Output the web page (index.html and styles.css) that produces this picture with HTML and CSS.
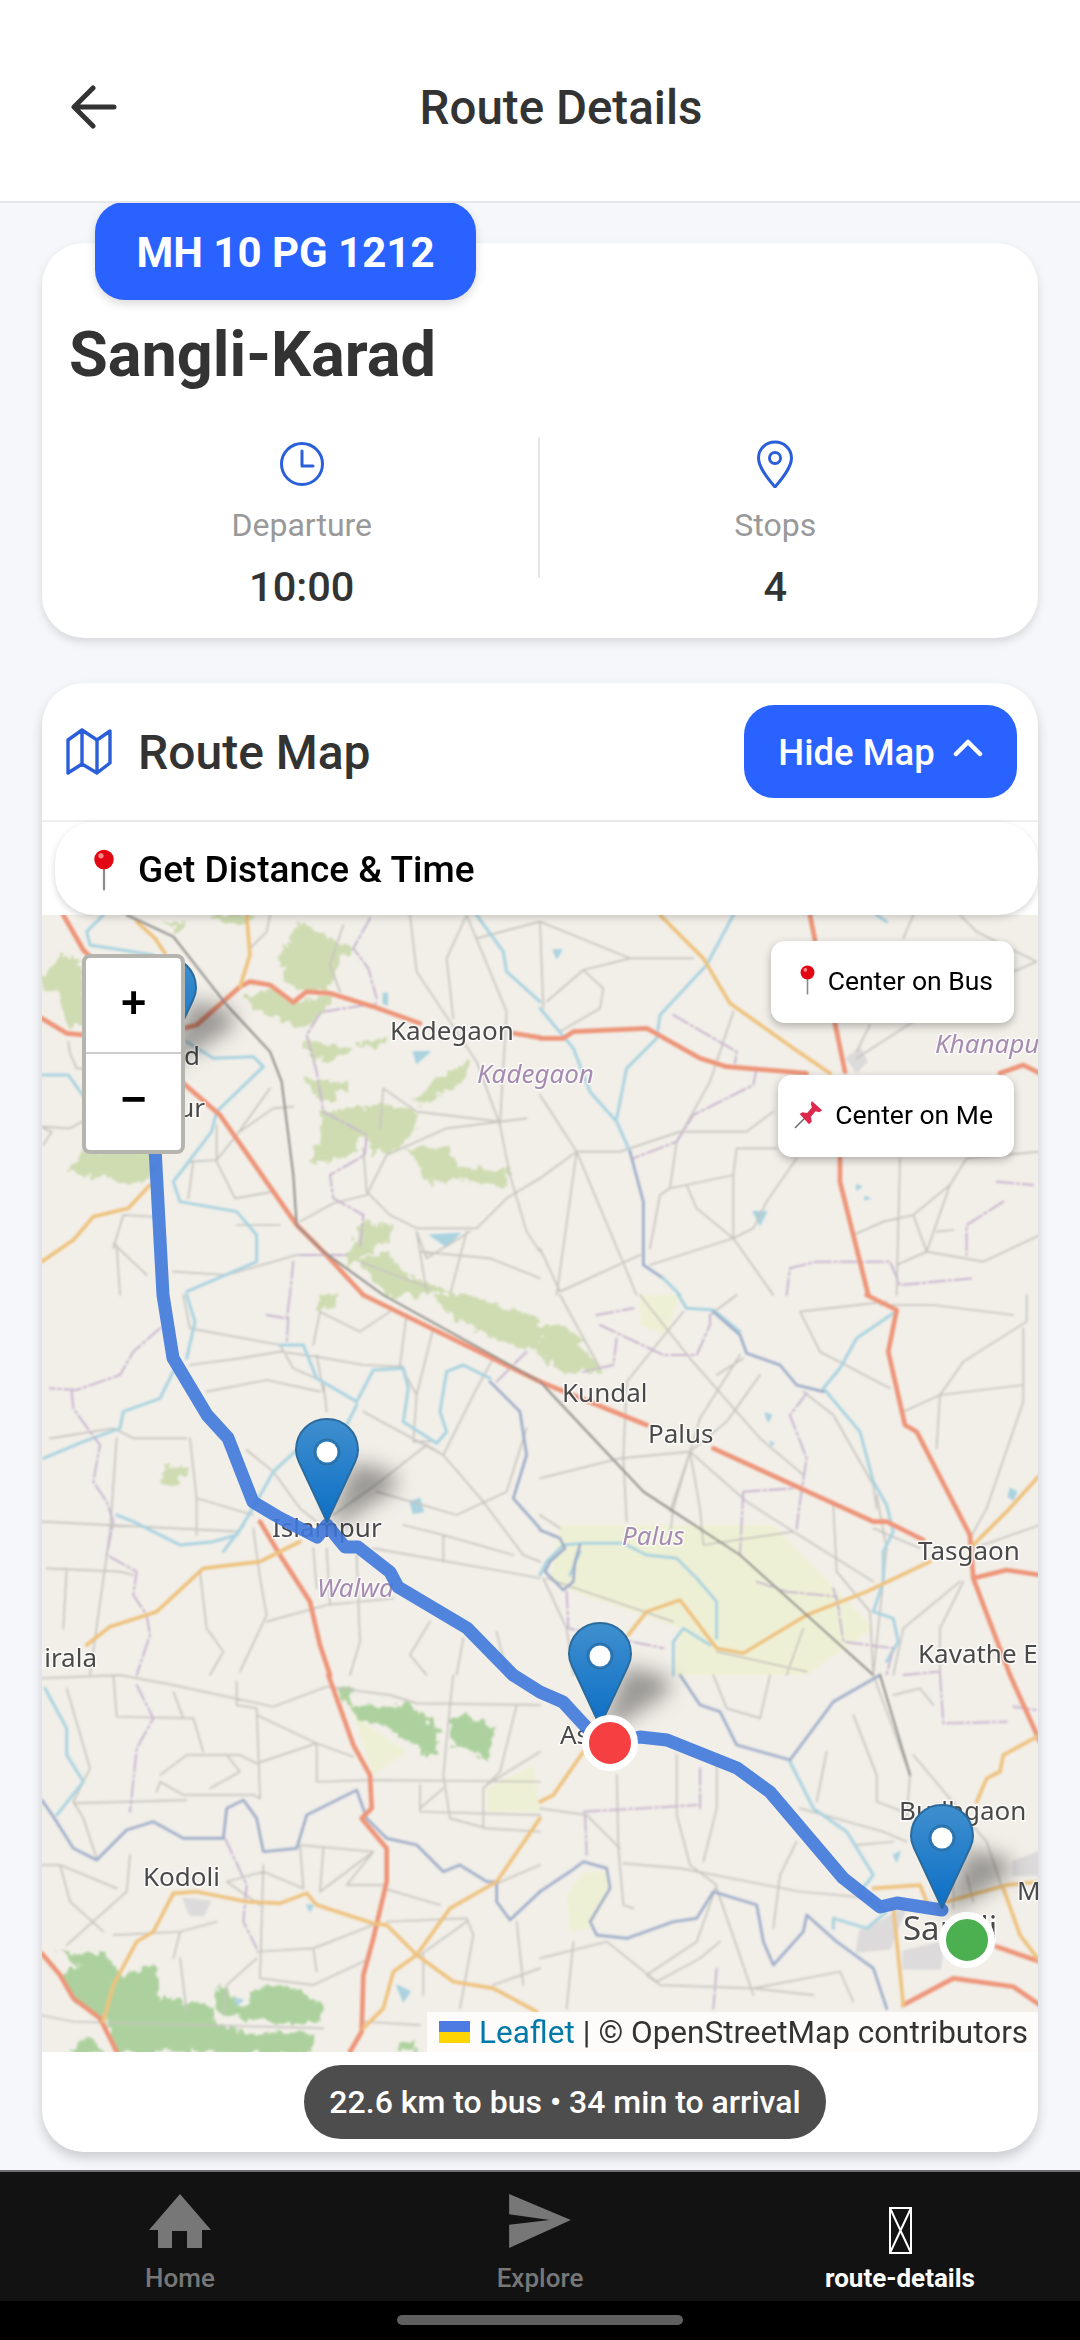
FILE: index.html
```html
<!DOCTYPE html>
<html lang="en">
<head>
<meta charset="utf-8">
<title>Route Details</title>
<link rel="stylesheet" href="styles.css">
</head>
<body>
<div class="app">
  <header class="topbar">
    <svg class="back" viewBox="0 0 46 44"><path d="M43 22H4M22 3 3 22l19 19"/></svg>
    <h1 class="title">Route Details</h1>
  </header>
  <main class="content">
    <section class="card info">
      <div class="badge">MH 10 PG 1212</div>
      <h2 class="name">Sangli-Karad</h2>
      <div class="stats">
        <div class="stat">
          <svg class="stat-icon" viewBox="0 0 48 48"><circle cx="24" cy="24" r="20.5"/><path d="M24 11v15h11"/></svg>
          <div class="stat-label">Departure</div>
          <div class="stat-value">10:00</div>
        </div>
        <div class="stat-divider"></div>
        <div class="stat">
          <svg class="stat-icon" viewBox="0 0 48 48"><path d="M24 2C15 2 7.500 9 7.500 18 7.500 28 18 40 24 47c6-7 16.500-19 16.500-29C40.500 9 33 2 24 2Z"/><circle cx="24" cy="18" r="5.500"/></svg>
          <div class="stat-label">Stops</div>
          <div class="stat-value">4</div>
        </div>
      </div>
    </section>

    <section class="card map-card">
      <div class="map-head">
        <div class="map-title">
          <svg class="map-icon" viewBox="0 0 48 48"><path d="M3 12 17 2 32 12 45 3V35L32 45 17 36 3 45ZM17 2V36M32 12V45"/></svg>
          <span>Route Map</span>
        </div>
        <button class="hide-btn"><span>Hide Map</span><svg viewBox="0 0 30 18"><path d="M3 15 15 3l12 12"/></svg></button>
      </div>
      <button class="distance-btn">
        <svg class="emoji-pin" viewBox="0 0 28 56"><path class="needle" d="M14 22v33"/><circle class="ball" cx="14" cy="14" r="13"/><circle class="shine" cx="10" cy="9" r="3.500"/></svg>
        <span>Get Distance &amp; Time</span>
      </button>

      <div class="map">
        <svg class="tiles" viewBox="42 915 996 1137" preserveAspectRatio="none">
          <defs>
            <filter id="soft" x="-2%" y="-2%" width="104%" height="104%"><feGaussianBlur stdDeviation="0.9"/></filter>
            <filter id="softtext" x="-5%" y="-5%" width="110%" height="110%"><feGaussianBlur stdDeviation="0.55"/></filter>
            <filter id="rough" x="-5%" y="-5%" width="110%" height="110%"><feTurbulence type="fractalNoise" baseFrequency="0.035" numOctaves="3" seed="4"/><feDisplacementMap in="SourceGraphic" scale="42" xChannelSelector="R" yChannelSelector="G"/></filter>
            <filter id="shadowblur" x="-80%" y="-80%" width="260%" height="260%"><feGaussianBlur stdDeviation="10"/></filter>
            <linearGradient id="pinfill" x1="0" y1="0" x2="0" y2="1"><stop offset="0" stop-color="#3f8fce"/><stop offset="1" stop-color="#0d6fc6"/></linearGradient>
            <g id="pin">
              <path class="pin-shadow" d="M2 0 26 -60 66 -50 70 -34 10 4Z" filter="url(#shadowblur)"/>
              <path class="pin-body" d="M0 0-28-60C-31-66-31-70-31-72-31-90-17-103 0-103S31-90 31-72C31-70 31-66 28-60Z"/>
              <circle class="pin-ring" cx="0" cy="-70" r="13"/>
              <circle class="pin-hole" cx="0" cy="-70" r="10.500"/>
            </g>
          </defs>
          <rect class="land" x="42" y="915" width="996" height="1137"/>
          <g filter="url(#soft)">
            <!-- tile block top left -->
            <g transform="translate(40 915) scale(.3333)">
              <path class="forest" filter="url(#rough)" d="M10 180 70 120 130 150 135 330 80 330 60 230 10 220ZM90 770 135 710 330 710 330 790 260 810 190 780ZM780 20 870 70 940 100 900 130 860 230 740 210 720 130ZM620 250 700 220 760 262 880 250 840 290 790 340 650 280ZM790 380 930 400 880 430 820 430ZM800 490 920 510 880 550 830 540ZM840 600 1020 570 1130 590 1100 680 1000 720 980 650 930 720 850 740 810 740 850 660ZM1100 700 1220 700 1250 760 1400 770 1400 810 1260 790 1170 800ZM1120 560 1200 490 1290 440 1260 500 1150 570ZM950 390 1040 370 1010 400ZM920 1010 980 920 1060 940 1030 990 960 1020 930 1050ZM950 1040 1040 1010 1090 1080 1230 1130 1050 1140ZM520 0 640 0 600 30ZM380 20 440 30 410 45Z"/>
              <path class="water" d="M1120 410 1170 410 1130 445ZM1170 960 1260 955 1220 995ZM1030 235 1042 235 1042 270 1030 265Z"/>
              <path class="minor" d="M85 380 90 415 110 460 135 460M5 635 90 640 135 615M10 640 35 650 10 690M400 800 450 740 530 735 590 660 690 520M530 630 530 740 585 850 700 830 770 920M600 650 700 580 760 575M445 850 460 740M220 1000 250 900 340 905M220 985 320 1080M240 1140 230 990M780 920 880 865 980 840 1040 720 1130 680 1220 640 1380 620 1460 610M1030 520 1020 640M1030 520 1130 590 1380 620M970 700 980 830 1050 900 1130 940 1310 940 1400 850 1500 790M1110 0 1130 170 1230 320 1310 440 1380 630 1410 780 1460 950 1500 1010M1280 0 1400 290 1380 630M1280 0 1220 130 1240 310M1310 70 1500 20M910 30 870 150 900 230M1130 950 1160 1030 1290 950M1140 1010 1350 1030 1500 1090M1280 950 1230 1140M1130 950 1160 1130M400 1070 560 1080 770 1020 920 1020M960 1040 1170 1120M690 0 680 50 630 100M590 930 720 930"/>
              <path class="river" d="M190 0 140 50 150 90 340 120M5 480 85 480 135 550M440 380 520 430 640 425 670 455 530 590 515 650 400 800 420 860 590 890 650 960 650 1040 440 1130M1310 0 1390 110 1400 170 1500 260"/>
              <path class="boundary" d="M990 10 940 100 985 160 1010 250M850 290 1010 265M840 295 800 360 830 470 850 590 980 660 975 720 870 780 880 850 970 900 960 1000M760 1040 750 1140M780 1020 920 1020"/>
              <path class="major" d="M70 0 130 105 150 125M5 310 80 355 135 360M430 340 470 330 600 215 630 200 690 210 760 262 800 230 870 235 1000 275 1140 325M1420 355 1500 368M430 505 540 600 770 930 850 1010 970 1140"/>
              <path class="second" d="M290 20 345 70 375 115M620 0 630 120 600 215M5 1040 100 975 160 905 265 880 330 810"/>
              <path class="rail" d="M260 0 400 65 560 270 690 410 725 500 760 780 770 930 850 1010 1030 1140"/>
            </g>
            <!-- tile block top right -->
            <g transform="translate(540 915) scale(.3333)">
              <path class="water" d="M40 105 65 105 50 130ZM640 890 680 890 660 930ZM950 810 965 815 950 825ZM975 845 990 850 975 855Z"/>
              <path class="urban" d="M920 430 960 400 980 440 950 470Z"/>
              <path class="minor" d="M0 20 270 130 460 130M270 130 130 165 20 260M130 165 190 220 180 280 60 350M0 20 10 280M0 540 110 710 290 1140M110 710 0 790M110 710 240 710 420 650 620 650 700 590M110 710 50 1140M580 290 510 500 410 680 390 820 360 840M390 820 440 810 580 780 590 700 710 700M440 810 470 880 580 970 640 940 680 860 770 730M360 840 330 1000M0 1000 60 1130M580 970 330 1050M580 970 580 780M580 970 700 1140M60 1130 300 1020M990 330 950 410M1120 320 950 430M1080 730 1070 1140M1230 810 1280 730 1500 710M1230 810 1120 900 1160 1010 1070 1050M1230 810 1160 1010M1120 900 1030 920 940 960M1160 1010 1330 1040 1500 960M1120 0 1090 70M1260 0 1310 50 1490 140 1420 170M1190 950 1240 945"/>
              <path class="river" d="M0 280 100 400 150 530 230 620 270 710M580 0 500 150 360 300 350 370 260 460 230 610M1010 0 1040 20"/>
              <path class="river-dark" d="M270 710 310 860 310 1050 370 1090"/>
              <path class="river" d="M370 1090 420 1140"/>
              <path class="boundary" d="M400 300 590 410 585 445M650 460 640 510 460 600 410 680 280 730M740 1140 750 1060 830 1040 1050 1040 1080 1110 1300 1090M1390 860 1280 930 1280 1020M1370 800 1480 810"/>
              <path class="major" d="M810 0 825 75M885 325 915 470M0 370 70 370 100 350 320 340 480 430 560 455 800 475M900 730 900 800 940 960 985 1140M1380 475 1450 450 1500 475"/>
              <path class="second" d="M360 0 490 130 570 265 760 400 870 475"/>
            </g>
            <!-- tile block middle left -->
            <g transform="translate(40 1295) scale(.3333)">
              <path class="forest" filter="url(#rough)" d="M840 0 890 0 880 40 840 35ZM370 520 440 520 400 575 370 565ZM1180 0 1270 0 1500 70 1500 170 1370 130 1250 70Z"/>
              <path class="water" d="M1110 620 1140 610 1150 650 1120 655Z"/>
              <path class="minor" d="M430 0 450 100 720 150M720 150 760 220 850 260 860 350M500 290 680 255 840 290M450 210 600 190 720 170 830 185 970 210 1090 215M840 50 820 150M840 50 960 110 1050 50M1100 60 1080 210 1130 300 1120 440 1170 440M1180 100 1130 300M830 180 850 290M970 350 1210 480 1330 620 1450 780 1500 800M1210 480 1160 450 1020 560 880 660M1010 590 1250 660 1400 590 1460 400M620 465 700 530 780 640 830 680M440 430 280 430 220 400 30 430M450 430 470 610 470 720M470 610 640 660M5 680 600 710M640 700 660 850 680 960 600 1130M680 980 860 930 1060 910M1000 760 1450 840 1500 850M1210 720 1210 800M1090 690 1210 720 1420 780M950 780 960 1040 930 1140M1170 980 1110 1080 1160 1140M860 760 870 930M820 760 830 880M1400 1130 1370 1010M1270 1030 1250 1140M230 430 210 710 150 1140M80 820 70 1000M480 830 500 1000 550 1070 510 1140M20 820 240 830 280 840M1360 190 1310 280 1210 480"/>
              <path class="river" d="M440 0 465 80 440 190M400 230 360 310 250 350 240 400 130 440 10 490M720 150 790 150 830 250 950 320M950 320 1000 225 1090 220 1105 280 1090 380 1190 445 1220 410 1200 350 1220 230 1270 210 1350 250M950 330 920 390M770 465 700 530 650 620 590 720 520 740 420 750 280 680 230 660M610 690 550 770"/>
              <path class="river-dark" d="M1350 260 1440 350 1460 480 1420 610 1500 700"/>
              <path class="boundary" d="M680 60 740 70 750 0M745 70 740 145M360 100 280 170 240 240 110 285 30 280M95 290 100 340 150 410 180 450 160 560 200 620 220 680 200 780 290 830 280 900 320 960 330 1020 290 1140M1460 170 1370 260"/>
              <path class="major" d="M660 680 720 780 810 920 840 1050 870 1140M970 0 1500 260"/>
              <path class="second" d="M780 740 660 800 490 820 350 950 210 995 140 1050"/>
              <path class="rail" d="M1030 0 1500 260"/>
            </g>
            <!-- tile block middle right -->
            <g transform="translate(540 1295) scale(.3333)">
              <path class="farm" d="M60 690 700 690 1000 1000 800 1140 400 1140 420 1000 130 900 30 860ZM300 0 420 0 380 120 300 90Z"/>
              <path class="forest" filter="url(#rough)" d="M0 100 50 90 110 130 180 230 80 230 0 180Z"/>
              <path class="water" d="M675 355 695 360 685 380ZM690 440 702 445 695 452ZM1410 580 1430 590 1420 615 1405 605Z"/>
              <path class="minor" d="M60 0 180 220M300 0 450 190 660 430 790 540M430 50 260 260 250 490 260 680M510 60 590 0M600 180 480 370 400 640 390 720M660 240 560 380 450 470M450 470 390 650M450 470 480 640 490 750M450 470 240 490 0 550M450 470 620 620 760 710 1000 860M760 710 490 750M0 660 60 700M780 50 840 170 1050 280M1090 350 1200 300 1450 270M1450 100 1450 320 1340 640 1290 730M1200 300 1190 460M1010 600 1040 760 1000 1140M880 630 890 830 990 950 1000 1140M610 190 530 240M790 290 880 360 1000 570 1010 640M1000 700 1140 760M1500 690 1300 760M1270 860 1200 1000 1200 1140M1260 860 1090 1000 1060 1140M10 850 80 1000 100 1140M20 850 400 980M790 1000 740 1140M530 1070 800 1130M1460 0 1460 80 1270 200 1200 300M1020 30 1180 30 1420 60M1040 20 780 50"/>
              <path class="river" d="M415 0 440 40 520 45 600 110M1060 55 950 130 900 220 850 280 960 410 1000 560 1040 630 1060 710 1030 770 1030 860 1000 950 1060 970 1075 1040 1040 1100M0 840 20 800 70 750 130 745 250 745 320 780 410 790 470 850 530 920 530 1030M400 1140 400 1040 430 1000 510 1050M90 840 120 770"/>
              <path class="river-dark" d="M520 50 600 120 620 175 720 210 770 270 850 290M0 705 60 730 75 760 30 800 15 830 70 885 100 860 105 800 120 750"/>
              <path class="boundary" d="M170 60 280 40M180 90 370 180 470 180 510 90M230 130 220 210 130 230M510 90 510 60M800 295 750 360 800 490 780 620 770 700M610 590 760 580M610 590 600 780M650 860 740 890 890 905 910 1040 1060 1060 1040 1140M880 880 900 950M80 890 85 1000 370 1060M1090 1140 1200 1130"/>
              <path class="major" d="M0 260 320 390M520 460 1000 680 1040 680 1150 735M980 0 1070 45 1045 170 1095 390 1130 410 1290 720 1300 850 1410 1140M1300 850 1400 825 1500 840"/>
              <path class="second" d="M265 1020 320 950 420 915 530 1060 610 1075 800 960 980 890 1170 800M1300 750 1400 650 1500 540"/>
              <path class="rail" d="M0 260 310 590 600 780 800 960 1000 1140"/>
            </g>
            <!-- tile block bottom left -->
            <g transform="translate(40 1675) scale(.3333)">
              <path class="farm" d="M940 120 1100 230 1000 300ZM1340 340 1480 270 1500 410 1340 410Z"/>
              <path class="forest-dark" filter="url(#rough)" d="M895 40 940 40 930 100 1110 90 1200 170 1190 210 1170 250 1090 180 950 120ZM1230 140 1290 120 1360 170 1340 260 1300 220 1240 210ZM60 830 200 840 240 905 215 1000 190 1040 150 1010 100 970 60 900 100 880 140 880ZM240 910 340 870 360 930 340 960 450 990 510 990 520 1040 580 1060 650 1090 600 1130 220 1130 200 1040ZM540 930 600 1000 680 930 740 930 850 990 830 1040 700 1040 620 1030 530 1010ZM90 1130 140 1090 190 1130ZM620 1075 820 1075 810 1130 600 1130ZM1070 1110 1120 1095 1125 1130Z"/>
              <path class="water" d="M1070 930 1110 950 1090 980ZM580 970 610 975 590 990ZM800 690 820 690 810 710Z"/>
              <path class="urban" d="M430 670 510 680 490 720 450 720Z"/>
              <path class="minor" d="M0 10 240 0 400 30 700 95 860 35 1050 60 1130 85 1500 90M80 40 150 280 100 380 130 430 170 550M220 0 230 125 460 130 490 230M400 50 430 130M590 20 590 90 650 100 660 370M650 120 830 205 940 245M650 265 830 205 830 320 1000 315 1500 320M360 300 440 240 600 240 650 265M350 350 360 320 430 360 640 360 660 370M100 385 440 375M560 240 600 290 510 340M1240 0 1230 90 1210 300 1230 430 1340 460 1500 470M1430 90 1380 290 1330 340 1330 460M1140 330 1140 410 1500 420M1500 230 1340 330M1140 400 1210 340M270 540 260 650 80 810M0 570 60 570 90 680 190 770M60 570 230 640M780 510 790 640 670 590 560 620 660 690M670 570 660 910 820 930 990 850M850 520 840 650 1000 530 780 510M1030 640 1200 690M920 630 1030 630M1000 530 920 630M820 820 1000 750M650 830 820 820 830 890M530 740 420 770 220 780M420 770 400 850M1040 740 1280 730 1300 780 1260 1000M1280 740 1140 840M1150 840 1150 960M1360 630 1500 570M1430 740 1450 930M1360 930 1500 880M420 850 440 1010M650 850 560 930 550 1020M0 1020 100 1040 850 1060M970 1040 1140 1050"/>
              <path class="river" d="M15 40 80 160 80 240 130 320 50 420"/>
              <path class="river-dark" d="M5 375 40 425 100 520 170 555 260 465 340 440 430 490 550 490 560 400 610 375 650 430 670 530 770 520 800 420 950 345 980 430 1040 490 1130 510 1210 590 1260 570 1340 620 1370 620 1370 680 1410 735 1500 650"/>
              <path class="boundary" d="M290 30 340 130 290 220 270 410M555 490 620 630 610 740 650 820"/>
              <path class="major" d="M865 0 940 210 990 300 995 400 965 430 1040 520 1040 620 1000 790 970 900 965 1070 930 1130M5 835 60 900 100 970 180 1030 230 1130"/>
              <path class="second" d="M190 1040 220 930 290 800 340 770 400 655 470 650 620 680 720 685 800 655 830 690 1000 745 1040 750 1130 840 1240 920 1360 940 1490 1010M1130 840 1230 700 1370 620 1500 430M1130 840 1060 890 1030 1000 970 1060"/>
            </g>
            <!-- tile block bottom right -->
            <g transform="translate(540 1675) scale(.3333)">
              <path class="farm" d="M80 660 130 590 200 590 210 650 150 760 90 770Z"/>
              <path class="urban" d="M960 770 1040 730 1100 690 1050 820 950 830ZM1090 830 1210 800 1200 880 1090 880ZM1420 560 1500 530 1500 600 1420 600Z"/>
              <path class="water" d="M1060 540 1080 530 1070 560Z"/>
              <path class="minor" d="M520 0 560 100 660 130 690 0M230 300 235 520 250 690 280 700M0 400 140 420 240 520M250 565 420 580 780 650 1000 670M410 240 410 420 450 570 530 630 470 800 320 900 360 930 640 940 900 890 940 980M530 260 530 400 490 560M940 120 1010 300 1010 380 1090 410M780 400 1030 470 1100 500M1000 0 1110 300 1100 430M860 230 830 380M770 500 720 600 700 760M950 510 1060 500M1120 240 1220 360 1340 500 1390 650M530 640 640 960M0 850 200 800 350 920 480 850 540 800M1240 600 1240 700M1280 600 1300 680M100 800 80 1000M640 940 820 960M1060 60 1140 40 1180 90"/>
              <path class="river" d="M750 260 820 400 920 470 1000 600 960 650 1040 710 980 760 880 730 880 760"/>
              <path class="river-dark" d="M420 0 480 90 540 110 590 210 750 255 880 80 1020 0M0 650 90 590 130 560 200 580 210 640 150 740 170 780 260 790 400 740 470 730 520 650 650 690 670 800 700 870 790 770 800 720 890 800 1000 880 1040 1000"/>
              <path class="boundary" d="M480 280 480 400M130 410 470 390M135 420 140 540M1200 0 1210 145 1400 140M1420 95 1490 105M530 880 520 1000"/>
              <path class="major" d="M1410 0 1500 200M1370 815 1500 860M1090 990 1240 910 1420 935 1500 990"/>
              <path class="second" d="M0 380 40 360 130 230M1500 180 1390 240 1380 290 1340 310 1310 380M1000 640 1140 630 1160 680M1220 680 1400 630 1500 620M1390 640 1440 780 1500 860M1060 700 1090 990"/>
              <path class="rail" d="M1020 0 1110 300"/>
            </g>
          </g>
          <g class="labels" filter="url(#softtext)">
            <text x="390" y="1040">Kadegaon</text>
            <text class="district" x="477" y="1083">Kadegaon</text>
            <text class="district" x="935" y="1053">Khanapur</text>
            <text x="562" y="1402">Kundal</text>
            <text x="648" y="1443">Palus</text>
            <text class="district" x="622" y="1545">Palus</text>
            <text x="918" y="1560">Tasgaon</text>
            <text x="918" y="1663">Kavathe Ekand</text>
            <text x="272" y="1537">Islampur</text>
            <text class="district" x="317" y="1597">Walwa</text>
            <text class="end" x="97" y="1667">Shirala</text>
            <text x="143" y="1886">Kodoli</text>
            <text class="big" x="903" y="1940">Sangli</text>
            <text x="899" y="1820">Budhgaon</text>
            <text x="560" y="1744">Ashta</text>
            <text x="1017" y="1900">Miraj</text>
            <text class="end" x="200" y="1065">Karad</text>
            <text class="end" x="205" y="1117">Malkapur</text>
          </g>
          <polyline class="route" points="165,1060 150,1075 155,1148 163,1295 173,1358 207,1415 228,1438 253,1502 280,1518 317,1537 327,1525 345,1547 358,1547 390,1572 398,1587 467,1628 513,1675 540,1692 563,1702 587,1728 610,1743 640,1737 667,1740 737,1768 770,1792 843,1878 880,1907 897,1903 942,1910"/>
          <use href="#pin" x="165" y="1060"/>
          <use href="#pin" x="327" y="1522"/>
          <use href="#pin" x="600" y="1726"/>
          <use href="#pin" x="942" y="1908"/>
          <circle class="dot" cx="610" cy="1743" r="24.500"/>
          <circle class="dot green" cx="967" cy="1940" r="24.500"/>
        </svg>

        <div class="zoom">
          <div class="zoom-btn">+</div>
          <div class="zoom-btn minus">−</div>
        </div>

        <div class="center-btns">
          <button class="center-btn bus">
            <svg class="emoji-pin small" viewBox="0 0 28 56"><path class="needle" d="M14 22v33"/><circle class="ball" cx="14" cy="14" r="13"/><circle class="shine" cx="10" cy="9" r="3.500"/></svg>
            <span>Center on Bus</span>
          </button>
          <button class="center-btn me">
            <svg class="pushpin" viewBox="0 0 32 32"><path class="needle thin" d="M1 31 13 19"/><path class="push" d="M19 2l11 10-3 2-4-1-5 6 1 5-3 3-10-11 3-2 5 1 5-6-1-4Z"/></svg>
            <span>Center on Me</span>
          </button>
        </div>

        <div class="attribution">
          <svg class="flag" viewBox="0 0 31 22"><rect class="flag-blue" width="31" height="11"/><rect class="flag-yellow" y="11" width="31" height="11"/></svg>
          <a class="leaflet">Leaflet</a><span class="sep">|</span><span>© OpenStreetMap contributors</span>
        </div>
      </div>

      <div class="eta-wrap"><div class="eta">22.6 km to bus • 34 min to arrival</div></div>
    </section>
  </main>

  <nav class="tabbar">
    <div class="tab">
      <svg class="tab-icon" viewBox="0 0 62 54"><path d="M31 0 0 36h9v18h14V37h15v17h15V36h9Z"/></svg>
      <span class="tab-label">Home</span>
    </div>
    <div class="tab">
      <svg class="tab-icon" viewBox="0 0 64 56"><path d="M0 0 64 27 0 56V32l42-5L0 21Z"/></svg>
      <span class="tab-label">Explore</span>
    </div>
    <div class="tab active">
      <svg class="tab-icon tofu" viewBox="0 0 23 47"><path d="M1 1h21v45H1ZM1 1l21 45M22 1 1 46"/></svg>
      <span class="tab-label">route-details</span>
    </div>
  </nav>
  <div class="gesture"><div class="handle"></div></div>
</div>
</body>
</html>
```

FILE: styles.css
```css
* { box-sizing: border-box; }
html, body { margin: 0; padding: 0; }
body { width: 1080px; height: 2340px; overflow: hidden; font-family: Roboto, "Noto Sans", sans-serif; background: #f5f7fb; }
.app { width: 1080px; height: 2340px; display: flex; flex-direction: column; }

.topbar { height: 203px; flex: none; background: #fff; border-bottom: 2px solid #e6e7ea; display: flex; align-items: center; justify-content: center; position: relative; }
.back { position: absolute; left: 71px; top: 85px; width: 46px; height: 44px; fill: none; stroke: #333; stroke-width: 5; stroke-linecap: round; stroke-linejoin: round; }
.title { margin: 0 0 0 42px; font-size: 47.500px; font-weight: 500; color: #333; line-height: 56px; position: relative; top: 7px; }

.content { height: 1967px; flex: none; padding: 40px 42px 0; display: flex; flex-direction: column; gap: 45px; overflow: hidden; }
.card { background: #fff; border-radius: 42px; box-shadow: 0 4px 10px rgba(0,0,0,.13); flex: none; }

.info { position: relative; padding: 72px 27px 25px 24px; height: 395px; }
.badge { position: absolute; left: 53px; top: -41px; width: 381px; height: 98px; padding-top: 2px; border-radius: 30px; background: #2962ff; color: #fff; font-size: 42px; font-weight: 700; display: flex; align-items: center; justify-content: center; box-shadow: 0 4px 10px rgba(0,0,0,.15); }
.name { margin: 0 0 0 3px; font-size: 63px; font-weight: 700; line-height: 80px; color: #333; }
.stats { margin-top: 42px; display: flex; }
.stat { flex: 1; padding-top: 3px; display: flex; flex-direction: column; align-items: center; }
.stat-divider { width: 2px; height: 141px; background: #e6e6e6; flex: none; }
.stat-icon { width: 48px; height: 48px; fill: none; stroke: #2b5fd9; stroke-width: 3; stroke-linecap: round; stroke-linejoin: round; }
.stat-label { margin-top: 15px; font-size: 32px; line-height: 44px; color: #999; }
.stat-value { margin-top: 15px; font-size: 41.500px; line-height: 50px; font-weight: 500; color: #333; }

.map-card { overflow: hidden; box-shadow: 0 6px 12px rgba(0,0,0,.18); }
.map-head { height: 139px; border-bottom: 2px solid #eee; padding: 22px 21px 22px 23px; display: flex; align-items: flex-start; justify-content: space-between; }
.map-title { display: flex; align-items: center; gap: 25px; height: 93px; font-size: 48px; font-weight: 500; color: #333; }
.map-title span { position: relative; top: 1px; }
.map-icon { width: 48px; height: 48px; fill: none; stroke: #2b5fd9; stroke-width: 3.4; stroke-linejoin: round; stroke-linecap: round; }
.hide-btn { width: 273px; height: 93px; border: 0; border-radius: 30px; background: #2962ff; color: #fff; font-family: inherit; font-size: 36.500px; font-weight: 500; display: flex; align-items: center; justify-content: center; gap: 18px; padding: 2px 0 0; }
.hide-btn svg { width: 30px; height: 18px; fill: none; stroke: #fff; stroke-width: 4.5; stroke-linecap: round; stroke-linejoin: round; position: relative; top: -5px; }

.distance-btn { display: flex; align-items: center; gap: 20px; width: 983px; height: 93px; margin-left: 13px; border: 0; border-radius: 40px; background: #fff; padding: 2px 0 0 35px; font-family: inherit; font-size: 37px; font-weight: 500; color: #000; box-shadow: 0 3px 7px rgba(0,0,0,.16); position: relative; z-index: 2; }
.emoji-pin { width: 28px; height: 42px; flex: none; }
.emoji-pin.small { width: 19px; height: 30px; }
.needle { fill: none; stroke: #8a8a8a; stroke-width: 3; }
.needle.thin { stroke: #666; stroke-width: 1.500; }
.ball { fill: #e30613; }
.shine { fill: #ff8a8a; }
.push { fill: #dc2a4e; }
.pushpin { width: 30px; height: 30px; flex: none; }

.map { position: relative; height: 1137px; overflow: hidden; }
.tiles { display: block; width: 996px; height: 1137px; }
.land { fill: #f2efe9; }
.forest { fill: #cfdcb2; stroke: #cfdcb2; stroke-width: 6; stroke-linejoin: round; }
.forest-dark { fill: #add19e; stroke: #add19e; stroke-width: 6; stroke-linejoin: round; }
.farm { fill: #eef0d5; }
.urban { fill: #dcdada; stroke: #dcdada; stroke-width: 6; stroke-linejoin: round; }
.water { fill: #aad3df; stroke: #aad3df; stroke-width: 4; stroke-linejoin: round; }
.minor, .river, .river-dark, .boundary, .major, .second, .rail { fill: none; stroke-linecap: round; stroke-linejoin: round; }
.minor { stroke: #c6c4be; stroke-width: 5; }
.river { stroke: #abd3df; stroke-width: 9; }
.river-dark { stroke: #9dacc8; stroke-width: 8; }
.boundary { stroke: #c9b6cf; stroke-width: 6; stroke-dasharray: 50 10 8 10; }
.major { stroke: #ed9478; stroke-width: 14; }
.second { stroke: #eec27e; stroke-width: 11; }
.rail { stroke: #8c8c88; stroke-width: 6; }

.labels text { font-family: "Noto Sans", "DejaVu Sans", sans-serif; font-size: 26px; fill: #4a4a4a; stroke: rgba(255,255,255,.75); stroke-width: 3px; paint-order: stroke; stroke-linejoin: round; }
.labels text.district { font-style: italic; fill: #a58bb0; }
.labels text.end { text-anchor: end; }
.labels text.big { font-size: 33px; }

.route { fill: none; stroke: #3f78dc; stroke-opacity: .9; stroke-width: 13; stroke-linejoin: round; stroke-linecap: round; }
.pin-shadow { fill: rgba(0,0,0,.36); }
.pin-body { fill: url(#pinfill); stroke: #2a6a9c; stroke-width: 2; stroke-linejoin: round; }
.pin-ring { fill: #2a78b8; stroke: #2d6d9e; stroke-width: 1; }
.pin-hole { fill: #fff; }
.dot { fill: #f53f41; stroke: #fff; stroke-width: 7; }
.dot.green { fill: #4caf50; }

.zoom { position: absolute; left: 40px; top: 39px; width: 103px; height: 200px; background: #fff; border: 4px solid #b5b4ae; border-radius: 8px; background-clip: padding-box; display: flex; flex-direction: column; overflow: hidden; }
.zoom-btn { flex: 1; display: flex; align-items: center; justify-content: center; font-family: "Liberation Sans", Arial, sans-serif; font-size: 44px; font-weight: 700; color: #000; padding-bottom: 4px; }
.zoom-btn.minus { border-top: 2px solid #ccc; padding-bottom: 6px; }

.center-btns { position: absolute; right: 24px; top: 26px; display: flex; flex-direction: column; align-items: flex-end; gap: 52px; }
.center-btn { height: 82px; border: 0; border-radius: 14px; background: #fff; display: flex; align-items: center; justify-content: flex-end; gap: 11px; padding: 0 21px 4px 0; font-family: inherit; font-size: 26.500px; color: #000; box-shadow: 0 3px 8px rgba(0,0,0,.28); }
.center-btn.bus { width: 243px; }
.center-btn.me { width: 236px; }

.attribution { position: absolute; right: 0; bottom: 0; width: 611px; height: 40px; background: rgba(255,255,255,.82); display: flex; align-items: center; padding-left: 12px; font-size: 31.500px; color: #333; white-space: nowrap; }
.flag { width: 31px; height: 22px; margin-right: 9px; flex: none; }
.flag-blue { fill: #4c7be1; }
.flag-yellow { fill: #ffd500; }
.leaflet { color: #0078a8; }
.sep { margin: 0 8px; }

.eta-wrap { height: 100px; display: flex; justify-content: center; padding: 13px 0 0 50px; }
.eta { width: 522px; height: 74px; border-radius: 37px; background: #4d4d4d; color: #fff; font-size: 32px; font-weight: 500; display: flex; align-items: center; justify-content: center; }

.tabbar { height: 131px; flex: none; background: #121212; border-top: 2px solid #6f6f6f; display: flex; }
.tab { flex: 1; position: relative; display: flex; flex-direction: column; align-items: center; color: #777; }
.tab-icon { position: absolute; top: 22px; width: 62px; height: 54px; fill: #777; }
.tab-label { position: absolute; top: 89px; font-size: 26px; font-weight: 500; line-height: 34px; white-space: nowrap; }
.tab.active { color: #fff; }
.tab.active .tab-label { font-weight: 700; }
.tab-icon.tofu { top: 35px; width: 23px; height: 47px; fill: none; stroke: #fff; stroke-width: 2; }
.gesture { height: 39px; flex: none; background: #000; display: flex; justify-content: center; padding-top: 14px; }
.handle { width: 286px; height: 10px; border-radius: 5px; background: #5f5f5f; }
```
